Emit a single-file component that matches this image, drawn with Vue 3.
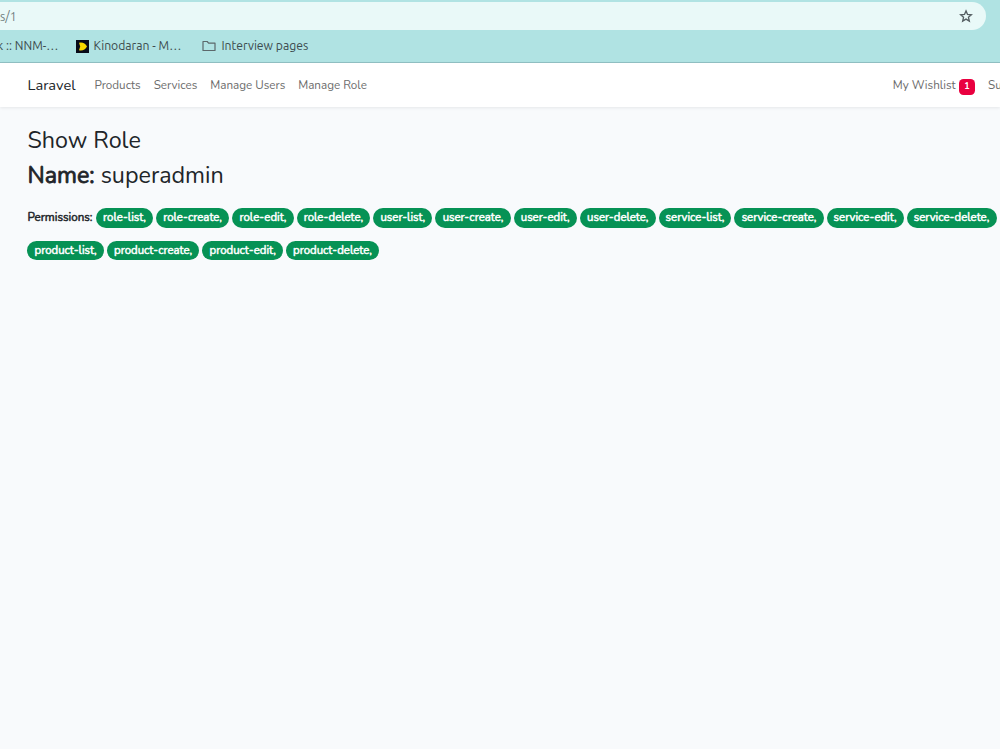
<template>
  <div class="screen">
    <header class="browser">
      <div class="address-bar">
        <span class="url">s/1</span>
        <svg class="star" viewBox="0 0 24 24">
          <path d="M12 3.2l2.6 6.1 6.6.6-5 4.4 1.500 6.500L12 17.300l-5.700 3.500 1.500-6.500-5-4.400 6.600-.6z" />
        </svg>
      </div>
      <div class="bookmarks">
        <span class="bookmark cut">k :: NNM-…</span>
        <span class="bookmark kino">
          <svg class="kino-icon" viewBox="0 0 13 13">
            <rect width="13" height="13" fill="#080a18" />
            <path d="M3 2.800Q8.500 1.800 11 6.500Q8.500 11.200 3 10.200L4.200 6.500z" fill="#f8d800" />
          </svg>
          <span class="kino-text">Kinodaran - M…</span>
        </span>
        <span class="bookmark folder">
          <svg class="folder-icon" viewBox="0 0 14 12">
            <path d="M1 1.500h4.200l1.400 1.600H13v7.400H1z" />
          </svg>
          <span class="folder-text">Interview pages</span>
        </span>
      </div>
    </header>

    <nav class="navbar">
      <a class="brand">Laravel</a>
      <a v-for="link in links" :key="link" class="nav-link">{{ link }}</a>
      <div class="nav-right">
        <a class="wishlist">My Wishlist</a>
        <span class="count">1</span>
        <a class="user">Su</a>
      </div>
    </nav>

    <main class="content">
      <h2 class="title">Show Role</h2>
      <h2 class="name"><strong>Name:</strong> <span>superadmin</span></h2>
      <div class="permissions">
        <strong class="label">Permissions:</strong>
        <span
          v-for="p in permissions"
          :key="p.name"
          class="badge"
          :style="{ width: p.width + 'px' }"
        >{{ p.name }},</span>
      </div>
    </main>
  </div>
</template>

<script setup>
const links = ['Products', 'Services', 'Manage Users', 'Manage Role']

const permissions = [
  { name: 'role-list', width: 56.7 },
  { name: 'role-create', width: 73.4 },
  { name: 'role-edit', width: 61.4 },
  { name: 'role-delete', width: 73.6 },
  { name: 'user-list', width: 59.2 },
  { name: 'user-create', width: 75.1 },
  { name: 'user-edit', width: 63.3 },
  { name: 'user-delete', width: 75.8 },
  { name: 'service-list', width: 72.8 },
  { name: 'service-create', width: 89.2 },
  { name: 'service-edit', width: 76.9 },
  { name: 'service-delete', width: 90 },
  { name: 'product-list', width: 76.5 },
  { name: 'product-create', width: 92.5 },
  { name: 'product-edit', width: 80.6 },
  { name: 'product-delete', width: 93 }
]
</script>

<style>
body {
  margin: 0;
  background: #f8fafc;
}
</style>

<style scoped>
.screen {
  width: 100%;
  height: 749px;
  overflow: hidden;
  background: #f8fafc;
  color: #212529;
  font-family: Nunito, Lato, sans-serif;
}

.browser {
  box-sizing: border-box;
  height: 63px;
  padding-top: 2px;
  background: #b0e3e3;
  border-bottom: 1px solid #91c1c4;
  font-family: Ubuntu, "Noto Sans", sans-serif;
  font-size: 12.2px;
  color: #3c4b4e;
}

.address-bar {
  display: flex;
  align-items: center;
  justify-content: space-between;
  box-sizing: border-box;
  width: 986px;
  height: 28px;
  padding-right: 13px;
  background: #e9f9f8;
  border-radius: 0 14px 14px 0;
}

.url {
  color: #6f7d7e;
}

.star {
  width: 14px;
  height: 14px;
  fill: none;
  stroke: #555e62;
  stroke-width: 2.3;
}

.bookmarks {
  display: flex;
  align-items: center;
  height: 32px;
}

.bookmark {
  display: flex;
  align-items: center;
  white-space: nowrap;
}

.cut {
  width: 79px;
  margin-left: -3px;
}

.kino {
  width: 126px;
}

.kino-icon {
  width: 13px;
  height: 13px;
  margin-right: 4.5px;
}

.folder-icon {
  width: 14px;
  height: 12px;
  margin-right: 5.5px;
  fill: none;
  stroke: #5c686b;
  stroke-width: 1.2;
  stroke-linejoin: round;
}

.cut,
.kino-text,
.folder-text {
  line-height: 16px;
}

.navbar {
  display: flex;
  align-items: center;
  box-sizing: border-box;
  height: 44px;
  padding-left: 27.5px;
  background: #fff;
  box-shadow: 0 1px 3px rgba(0, 0, 0, 0.08);
  white-space: nowrap;
}

.brand {
  width: 67px;
  font-size: 14.6px;
}

.nav-link {
  margin-right: 13px;
  font-size: 11.65px;
  color: #6c6c6c;
}

.nav-right {
  display: flex;
  align-items: center;
  width: 107.2px;
  margin-left: auto;
  font-size: 11.65px;
  color: #6c6c6c;
}

.wishlist {
  flex: none;
  width: 66.2px;
}

.count {
  flex: none;
  width: 16px;
  height: 16px;
  margin-top: 3px;
  border-radius: 4.5px;
  background: #e9003f;
  color: #fff;
  font-size: 9px;
  font-weight: 700;
  line-height: 15px;
  text-align: center;
}

.user {
  flex: none;
  margin-left: 13px;
}

.content {
  padding: 19px 0 0 27.4px;
}

.title,
.name {
  margin: 0;
  font-size: 23.3px;
  font-weight: 400;
  line-height: 28px;
}

.name {
  margin-top: 7px;
}

/* thickened regular weight, so the advances stay those of the regular face */
.name strong {
  font-weight: 400;
  -webkit-text-stroke: 0.8px currentColor;
}

.permissions {
  display: flex;
  flex-wrap: wrap;
  align-items: center;
  gap: 13px 3px;
  margin-top: 19px;
  font-size: 11.4px;
}

.label {
  width: 65.8px;
  font-size: 11.6px;
  font-weight: 400;
  line-height: 19px;
  -webkit-text-stroke: 0.5px currentColor;
}

.badge {
  box-sizing: border-box;
  height: 19.5px;
  border-radius: 10px;
  background: #069255;
  color: #fff;
  font-weight: 400;
  line-height: 19px;
  text-align: center;
  white-space: nowrap;
  -webkit-text-stroke: 0.5px currentColor;
}
</style>
